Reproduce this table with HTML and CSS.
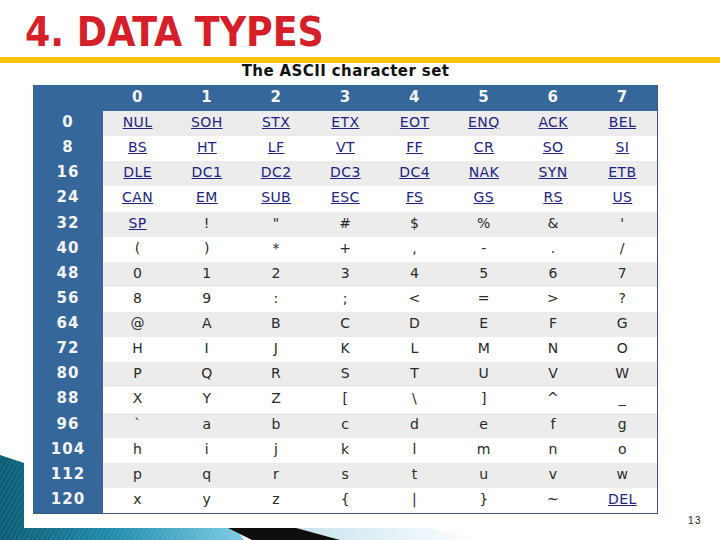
FILE: index.html
```html
<!DOCTYPE html>
<html>
<head>
<meta charset="utf-8">
<link rel="stylesheet" href="styles.css">
</head>
<body>
<div class="slide">
  <svg class="deco" width="720" height="90" viewBox="0 0 720 90">
    <defs>
      <linearGradient id="teal" x1="0" y1="0" x2="1" y2="0">
        <stop offset="0" stop-color="#0a5a72"/>
        <stop offset="0.45" stop-color="#1f8aab"/>
        <stop offset="1" stop-color="#7cccE4"/>
      </linearGradient>
      <linearGradient id="pale" x1="0" y1="0" x2="1" y2="0">
        <stop offset="0" stop-color="#c6e2ee"/>
        <stop offset="1" stop-color="#ffffff"/>
      </linearGradient>
      <pattern id="stripes" width="4" height="4" patternUnits="userSpaceOnUse" patternTransform="rotate(30)">
        <rect width="1" height="4" fill="#ffffff" fill-opacity="0.12"/>
      </pattern>
    </defs>
    <polygon points="290,78 430,78 480,90 320,90" fill="url(#pale)"/>
    <polygon points="0,5 24,13 24,78 236,78 244,90 0,90" fill="url(#teal)"/>
    <polygon points="0,5 24,13 24,78 236,78 244,90 0,90" fill="url(#stripes)"/>
    <polygon points="228,78 296,78 340,90 252,90" fill="#0e0e0e"/>
  </svg>

  <h1 class="title">4. DATA TYPES</h1>
  <div class="rule"></div>

  <div class="figure">
    <div class="caption">The ASCII character set</div>
    <div class="ascii">
      <div class="row head"><span class="lab"></span><span>0</span><span>1</span><span>2</span><span>3</span><span>4</span><span>5</span><span>6</span><span>7</span></div>
      <div class="row alt"><span class="lab">0</span><span><a class="ctl">NUL</a></span><span><a class="ctl">SOH</a></span><span><a class="ctl">STX</a></span><span><a class="ctl">ETX</a></span><span><a class="ctl">EOT</a></span><span><a class="ctl">ENQ</a></span><span><a class="ctl">ACK</a></span><span><a class="ctl">BEL</a></span></div>
      <div class="row"><span class="lab">8</span><span><a class="ctl">BS</a></span><span><a class="ctl">HT</a></span><span><a class="ctl">LF</a></span><span><a class="ctl">VT</a></span><span><a class="ctl">FF</a></span><span><a class="ctl">CR</a></span><span><a class="ctl">SO</a></span><span><a class="ctl">SI</a></span></div>
      <div class="row alt"><span class="lab">16</span><span><a class="ctl">DLE</a></span><span><a class="ctl">DC1</a></span><span><a class="ctl">DC2</a></span><span><a class="ctl">DC3</a></span><span><a class="ctl">DC4</a></span><span><a class="ctl">NAK</a></span><span><a class="ctl">SYN</a></span><span><a class="ctl">ETB</a></span></div>
      <div class="row"><span class="lab">24</span><span><a class="ctl">CAN</a></span><span><a class="ctl">EM</a></span><span><a class="ctl">SUB</a></span><span><a class="ctl">ESC</a></span><span><a class="ctl">FS</a></span><span><a class="ctl">GS</a></span><span><a class="ctl">RS</a></span><span><a class="ctl">US</a></span></div>
      <div class="row alt"><span class="lab">32</span><span><a class="ctl">SP</a></span><span>!</span><span>"</span><span>#</span><span>$</span><span>%</span><span>&amp;</span><span>'</span></div>
      <div class="row"><span class="lab">40</span><span>(</span><span>)</span><span>*</span><span>+</span><span>,</span><span>-</span><span>.</span><span>/</span></div>
      <div class="row alt"><span class="lab">48</span><span>0</span><span>1</span><span>2</span><span>3</span><span>4</span><span>5</span><span>6</span><span>7</span></div>
      <div class="row"><span class="lab">56</span><span>8</span><span>9</span><span>:</span><span>;</span><span>&lt;</span><span>=</span><span>&gt;</span><span>?</span></div>
      <div class="row alt"><span class="lab">64</span><span>@</span><span>A</span><span>B</span><span>C</span><span>D</span><span>E</span><span>F</span><span>G</span></div>
      <div class="row"><span class="lab">72</span><span>H</span><span>I</span><span>J</span><span>K</span><span>L</span><span>M</span><span>N</span><span>O</span></div>
      <div class="row alt"><span class="lab">80</span><span>P</span><span>Q</span><span>R</span><span>S</span><span>T</span><span>U</span><span>V</span><span>W</span></div>
      <div class="row"><span class="lab">88</span><span>X</span><span>Y</span><span>Z</span><span>[</span><span>\</span><span>]</span><span>^</span><span>_</span></div>
      <div class="row alt"><span class="lab">96</span><span>`</span><span>a</span><span>b</span><span>c</span><span>d</span><span>e</span><span>f</span><span>g</span></div>
      <div class="row"><span class="lab">104</span><span>h</span><span>i</span><span>j</span><span>k</span><span>l</span><span>m</span><span>n</span><span>o</span></div>
      <div class="row alt"><span class="lab">112</span><span>p</span><span>q</span><span>r</span><span>s</span><span>t</span><span>u</span><span>v</span><span>w</span></div>
      <div class="row"><span class="lab">120</span><span>x</span><span>y</span><span>z</span><span>{</span><span>|</span><span>}</span><span>~</span><span><a class="ctl">DEL</a></span></div>
    </div>
  </div>

  <div class="page-num">13</div>
</div>
</body>
</html>
```

FILE: styles.css
```css
html, body {
  margin: 0;
  padding: 0;
  background: #ffffff;
}

.slide {
  position: relative;
  width: 720px;
  height: 540px;
  overflow: hidden;
  background: #ffffff;
}

.deco {
  position: absolute;
  left: 0;
  bottom: 0;
}

.title {
  margin: 0;
  height: 57px;
  box-sizing: border-box;
  padding: 10px 0 0 25px;
  font-family: "DejaVu Sans Condensed", "DejaVu Sans", sans-serif;
  font-stretch: condensed;
  font-weight: bold;
  font-size: 40.5px;
  line-height: 44px;
  color: #d5202a;
}

.rule {
  height: 6px;
  background: #fbc20f;
}

.figure {
  width: 625px;
  margin-left: 33px;
}

.caption {
  height: 22px;
  box-sizing: border-box;
  padding-top: 0;
  text-align: center;
  font-family: "DejaVu Sans", sans-serif;
  font-weight: bold;
  font-size: 15px;
  line-height: 16px;
  color: #111111;
  letter-spacing: 0.4px;
}

.ascii {
  width: 624px;
  border-right: 1px solid #3e5877;
  border-bottom: 1px solid #3e5877;
  background: #ffffff;
}

.row {
  display: grid;
  grid-template-columns: 70px repeat(8, 69.25px);
  height: 25.125px;
  align-items: center;
  justify-items: center;
  font-family: "DejaVu Sans", sans-serif;
  font-size: 14px;
  line-height: 16px;
  color: #2a2a2a;
  letter-spacing: 0.4px;
}

.row > span {
  padding-bottom: 3px;
}

.row.alt {
  background: #ececec;
}

.row.head {
  height: 26px;
  background: #36679b;
  color: #f4f4f4;
  font-weight: bold;
  font-size: 15px;
  letter-spacing: 1px;
}

.row.head > span {
  padding-bottom: 2px;
}

.row > .lab {
  align-self: stretch;
  justify-self: stretch;
  display: flex;
  align-items: center;
  justify-content: center;
  background: #36679b;
  color: #f4f4f4;
  font-weight: bold;
  font-size: 15px;
  letter-spacing: 1px;
}

.ctl {
  color: #1d2580;
  text-decoration: underline;
}

.page-num {
  position: absolute;
  left: 688px;
  top: 515px;
  font-family: "Liberation Sans", sans-serif;
  font-size: 10px;
  letter-spacing: 1.5px;
  color: #222222;
}
```
